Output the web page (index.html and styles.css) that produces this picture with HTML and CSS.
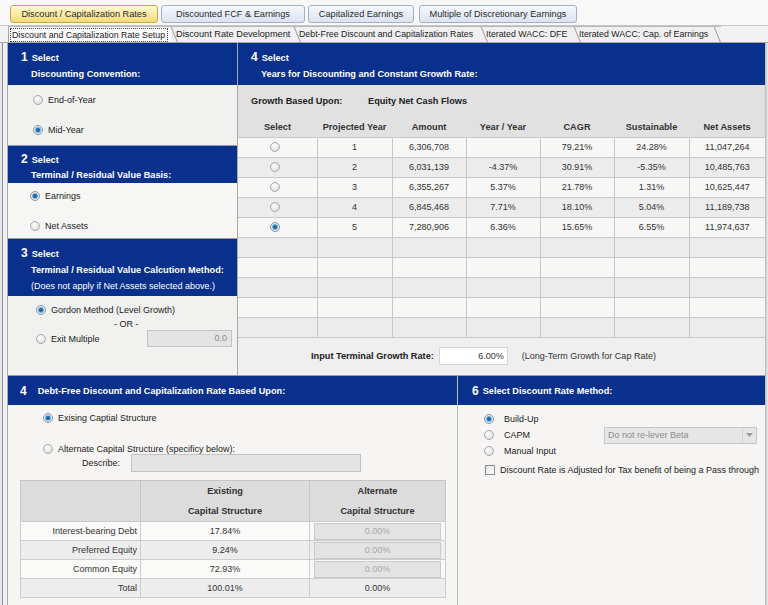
FILE: index.html
```html
<!DOCTYPE html>
<html>
<head>
<meta charset="utf-8">
<link rel="stylesheet" href="styles.css">
</head>
<body>
<div class="topbar">
  <div class="tbtn active w1">Discount / Capitalization Rates</div>
  <div class="tbtn w2">Discounted FCF &amp; Earnings</div>
  <div class="tbtn w3">Capitalized Earnings</div>
  <div class="tbtn w4">Multiple of Discretionary Earnings</div>
</div>
<div class="subtabs">
  <div class="stab t1 active"><span class="focus">Discount and Capitalization Rate Setup</span></div>
  <div class="stab t2">Discount Rate Development</div>
  <div class="stab t3">Debt-Free Discount and Capitalization Rates</div>
  <div class="stab t4">Iterated WACC: DFE</div>
  <div class="stab t5">Iterated WACC: Cap. of Earnings</div>
</div>
<div class="frame">
  <div class="gutter"></div>
  <div class="main">
    <div class="toprow">
      <div class="leftcol">
        <div class="hdr hA">
          <div class="l1"><span class="num">1</span>Select</div>
          <div class="l2">Discounting Convention:</div>
        </div>
        <div class="body b1">
          <div class="opt"><span class="radio"></span>End-of-Year</div>
          <div class="opt"><span class="radio on"></span>Mid-Year</div>
        </div>
        <div class="hdr hB">
          <div class="l1"><span class="num">2</span>Select</div>
          <div class="l2">Terminal / Residual Value Basis:</div>
        </div>
        <div class="body b2">
          <div class="opt"><span class="radio on"></span>Earnings</div>
          <div class="opt"><span class="radio"></span>Net Assets</div>
        </div>
        <div class="hdr hC">
          <div class="l1"><span class="num">3</span>Select</div>
          <div class="l2">Terminal / Residual Value Calcution Method:</div>
          <div class="l2 reg">(Does not apply if Net Assets selected above.)</div>
        </div>
        <div class="body b3">
          <div class="opt"><span class="radio on"></span>Gordon Method (Level Growth)</div>
          <div class="or">- OR -</div>
          <div class="opt exit"><span class="radio"></span><span class="exl">Exit Multiple</span><span class="field num-field">0.0</span></div>
        </div>
      </div>
      <div class="rightcol">
        <div class="hdr hA">
          <div class="l1"><span class="num">4</span>Select</div>
          <div class="l2">Years for Discounting and Constant Growth Rate:</div>
        </div>
        <div class="strip"><span class="gl">Growth Based Upon:</span><span>Equity Net Cash Flows</span></div>
        <table class="proj">
          <colgroup>
            <col class="c1"><col class="c2"><col class="c3"><col class="c3"><col class="c3"><col class="c2"><col class="c4">
          </colgroup>
          <thead>
            <tr><th>Select</th><th>Projected Year</th><th>Amount</th><th>Year / Year</th><th>CAGR</th><th>Sustainable</th><th>Net Assets</th></tr>
          </thead>
          <tbody>
            <tr><td><span class="radio"></span></td><td>1</td><td>6,306,708</td><td></td><td>79.21%</td><td>24.28%</td><td>11,047,264</td></tr>
            <tr><td><span class="radio"></span></td><td>2</td><td>6,031,139</td><td>-4.37%</td><td>30.91%</td><td>-5.35%</td><td>10,485,763</td></tr>
            <tr><td><span class="radio"></span></td><td>3</td><td>6,355,267</td><td>5.37%</td><td>21.78%</td><td>1.31%</td><td>10,625,447</td></tr>
            <tr><td><span class="radio"></span></td><td>4</td><td>6,845,468</td><td>7.71%</td><td>18.10%</td><td>5.04%</td><td>11,189,738</td></tr>
            <tr><td><span class="radio on"></span></td><td>5</td><td>7,280,906</td><td>6.36%</td><td>15.65%</td><td>6.55%</td><td>11,974,637</td></tr>
            <tr><td></td><td></td><td></td><td></td><td></td><td></td><td></td></tr>
            <tr><td></td><td></td><td></td><td></td><td></td><td></td><td></td></tr>
            <tr><td></td><td></td><td></td><td></td><td></td><td></td><td></td></tr>
            <tr><td></td><td></td><td></td><td></td><td></td><td></td><td></td></tr>
            <tr><td></td><td></td><td></td><td></td><td></td><td></td><td></td></tr>
          </tbody>
        </table>
        <div class="term">
          <span class="tl">Input Terminal Growth Rate:</span>
          <span class="tin">6.00%</span>
          <span class="tn">(Long-Term Growth for Cap Rate)</span>
        </div>
      </div>
    </div>
    <div class="bottom">
      <div class="bl">
        <div class="bh"><span class="num">4</span>Debt-Free Discount and Capitalization Rate Based Upon:</div>
        <div class="blbody">
          <div class="opt o1"><span class="radio on"></span>Exising Captial Structure</div>
          <div class="opt o2"><span class="radio"></span>Alternate Capital Structure (specificy below):</div>
          <div class="desc"><span class="dl">Describe:</span><span class="field dfield"></span></div>
          <table class="cap">
            <colgroup><col class="k1"><col class="k2"><col class="k3"></colgroup>
            <thead>
              <tr><th></th><th>Existing<br>Capital Structure</th><th>Alternate<br>Capital Structure</th></tr>
            </thead>
            <tbody>
              <tr><td class="lab">Interest-bearing Debt</td><td>17.84%</td><td><span class="cin">0.00%</span></td></tr>
              <tr><td class="lab">Preferred Equity</td><td>9.24%</td><td><span class="cin">0.00%</span></td></tr>
              <tr><td class="lab">Common Equity</td><td>72.93%</td><td><span class="cin">0.00%</span></td></tr>
              <tr><td class="lab">Total</td><td>100.01%</td><td>0.00%</td></tr>
            </tbody>
          </table>
        </div>
      </div>
      <div class="br">
        <div class="bh"><span class="num">6</span>Select Discount Rate Method:</div>
        <div class="brbody">
          <div class="opt"><span class="radio on"></span>Build-Up</div>
          <div class="opt"><span class="radio"></span>CAPM<span class="dd"><span class="ddt">Do not re-lever Beta</span><span class="dda"><svg width="7" height="4" viewBox="0 0 7 4"><path d="M0 0h7L3.5 4z" fill="#9a9a9a"/></svg></span></span></div>
          <div class="opt"><span class="radio"></span>Manual Input</div>
          <div class="opt chk"><span class="cbox"></span>Discount Rate is Adjusted for Tax benefit of being a Pass through</div>
        </div>
      </div>
    </div>
  </div>
  <div class="shadow"></div>
</div>
</body>
</html>
```
FILE: styles.css
```css
* { box-sizing: border-box; }
html, body { margin: 0; padding: 0; }
body {
  width: 768px;
  height: 605px;
  overflow: hidden;
  background: #f2f2f2;
  font-family: "Liberation Sans", Arial, sans-serif;
  font-size: 9px;
  color: #222;
}

/* top button tabs */
.topbar {
  height: 26px;
  display: flex;
  gap: 3px;
  padding: 5px 0 0 10px;
  background: #f8f8f8;
  border-bottom: 1px solid #c6c6c6;
}
.tbtn {
  height: 18px;
  border: 1px solid #a3b0c6;
  border-radius: 3px;
  background: linear-gradient(#f6f9fd, #dae3f0);
  display: flex;
  align-items: center;
  justify-content: center;
  font-size: 9.2px;
  color: #2a2a2a;
  white-space: nowrap;
}
.tbtn.active {
  border-color: #c9a646;
  background: linear-gradient(#fef9d6, #f6dc76);
}
.w1 { width: 148px; }
.w2 { width: 144px; }
.w3 { width: 106px; }
.w4 { width: 158px; margin-left: 2px; }

/* sub tabs */
.subtabs {
  height: 17px;
  display: flex;
  padding-left: 8px;
  background: #f2f2f2;
  border-bottom: 1px solid #a8a8a8;
}
.stab {
  position: relative;
  height: 16px;
  line-height: 15px;
  font-size: 8.8px;
  color: #222;
  border-top: 1px solid #b8b8b8;
  padding-left: 5px;
  white-space: nowrap;
  background: #f0f0f0;
}
.stab + .stab::before {
  content: "";
  position: absolute;
  left: 3px;
  top: 0;
  width: 1px;
  height: 16px;
  background: #9c9c9c;
  transform: skewX(22deg);
}
.t1 { width: 163px; padding-left: 1px; background: #fbfbfb; border-left: 1px solid #a8a8a8; }
.t2 { width: 123px; font-size: 9.2px; }
.t3 { width: 187px; }
.t4 { width: 93px; }
.t5 { width: 147px; }
.t5::after {
  content: "";
  position: absolute;
  right: 3px;
  top: 0;
  width: 1px;
  height: 16px;
  background: #9c9c9c;
  transform: skewX(22deg);
}
.focus {
  display: inline-block;
  border: 1px dotted #444;
  line-height: 12px;
  padding: 0 2px 0 1px;
  margin-top: 1px;
}

/* frame */
.frame { display: flex; height: 562px; }
.gutter {
  width: 8px;
  background: linear-gradient(to right, #e9e9e9 0 2px, #8d8d8d 2px 3px, #eef2f8 3px 7px, #a9a9a9 7px 8px);
}
.main { width: 757px; display: flex; flex-direction: column; }
.shadow {
  width: 3px;
  background: linear-gradient(to right, #b5b5b5, #d8d8d8 60%, #eeeeee);
}

.toprow { height: 332px; display: flex; }
.leftcol {
  width: 230px;
  border-right: 1px solid #a9a9a9;
  display: flex;
  flex-direction: column;
}
.rightcol {
  width: 527px;
  display: flex;
  flex-direction: column;
  background: #e1e1e1;
}

/* blue headers */
.hdr {
  background: #0a308e;
  color: #fff;
  font-weight: bold;
  font-size: 9.2px;
  padding-left: 13px;
}
.hdr .l1 { display: flex; align-items: baseline; }
.num { font-size: 12px; font-weight: bold; margin-right: 4px; }
.hdr .l2 { padding-left: 10px; }
.hdr .reg { font-weight: normal; font-size: 9px; }
.hA { height: 42px; padding-top: 6px; line-height: 16px; }
.hB { height: 38px; padding-top: 6px; line-height: 15px; border-top: 1px solid #8c9cc7; }
.hC { height: 58px; padding-top: 6px; line-height: 16px; border-top: 1px solid #9a9a9a; }

/* bodies */
.body { background: #f1f1f0; display: flex; flex-direction: column; }
.opt { display: flex; align-items: center; gap: 5px; height: 16px; white-space: nowrap; }
.b1 { height: 60px; padding: 7px 0 0 25px; gap: 14px; }
.b2 { height: 55px; padding: 5px 0 0 22px; gap: 14px; background: #f6f6f5; }
.b3 { height: 79px; padding: 6px 0 0 28px; }
.or { height: 12px; line-height: 12px; padding-left: 78px; }
.exit { height: 17px; }
.exl { width: 91px; }
.field {
  display: inline-block;
  background: #e4e4e4;
  border: 1px solid #c3c3c3;
  color: #8a8a8a;
}
.num-field { width: 85px; height: 17px; line-height: 15px; text-align: right; padding-right: 4px; }

/* radio */
.radio {
  flex: none;
  display: inline-block;
  width: 10px;
  height: 10px;
  border-radius: 50%;
  border: 1px solid #ababab;
  background: radial-gradient(circle at 40% 35%, #ffffff, #d4d4d4);
}
.radio.on {
  border-color: #8796a8;
  background: radial-gradient(circle, #0f5598 0, #2a7bc0 1.8px, #9bc0e0 2.8px, #e8e8e8 3.5px);
}
.cbox {
  flex: none;
  width: 10px;
  height: 10px;
  border: 1px solid #8e8e8e;
  background: linear-gradient(135deg, #e2e2e2, #ffffff);
}

/* right column */
.strip { height: 32px; padding: 8px 0 0 13px; line-height: 16px; font-weight: bold; font-size: 9.2px; color: #222; display: flex; }
.gl { width: 117px; }

.proj {
  border-collapse: collapse;
  table-layout: fixed;
  width: 527px;
}
.c1 { width: 79px; }
.c2 { width: 75px; }
.c3 { width: 74px; }
.c4 { width: 76px; }
.proj th {
  height: 20px;
  font-weight: bold;
  font-size: 9.2px;
  color: #333;
  text-align: center;
  padding: 0;
  background: #e1e1e1;
}
.proj td {
  height: 20px;
  padding: 0;
  text-align: center;
  border: 1px solid #c8c8c8;
  color: #333;
}
.proj td:first-child { border-left: none; }
.proj td:last-child { border-right: none; }
.proj tbody tr:nth-child(odd) td { background: #f7f7f5; }
.proj tbody tr:nth-child(even) td { background: #ececec; }
.proj .radio { vertical-align: middle; margin-left: -5px; margin-top: -2px; }

.term {
  flex: 1;
  display: flex;
  align-items: center;
  padding-left: 73px;
  background: #efefef;
}
.tl { font-weight: bold; font-size: 9.2px; margin-right: 5px; }
.tin {
  width: 69px;
  height: 18px;
  line-height: 16px;
  background: #fff;
  border: 1px solid #d6d6d6;
  text-align: right;
  padding-right: 3px;
  color: #333;
}
.tn { margin-left: 14px; color: #333; }

/* bottom */
.bottom { height: 230px; display: flex; border-top: 1px solid #9c9c9c; }
.bl { width: 450px; border-right: 1px solid #bdbdbd; display: flex; flex-direction: column; }
.br { width: 307px; display: flex; flex-direction: column; }
.bh {
  height: 29px;
  background: #0a308e;
  color: #fff;
  font-weight: bold;
  font-size: 9.2px;
  display: flex;
  align-items: center;
  padding-left: 12px;
}
.bl .bh .num { margin-right: 11px; }
.br .bh { padding-left: 14px; }
.br .bh .num { margin-right: 4px; }

.blbody { flex: 1; background: #f6f5f3; padding: 6px 0 0 35px; display: flex; flex-direction: column; }
.blbody .opt { height: 14px; }
.o2 { margin-top: 17px; }
.desc { display: flex; align-items: center; margin: -2px 0 0 39px; height: 18px; }
.dl { width: 49px; }
.dfield { width: 230px; height: 18px; }

.cap {
  margin: 8px 0 0 -23px;
  border-collapse: collapse;
  table-layout: fixed;
  width: 425px;
  border: 1px solid #c5c5c5;
}
.k1 { width: 120px; }
.k2 { width: 169px; }
.k3 { width: 136px; }
.cap th {
  height: 39px;
  background: #dcdcdc;
  font-weight: bold;
  font-size: 9.2px;
  line-height: 20px;
  color: #333;
  padding: 0;
  border-left: 1px solid #c5c5c5;
}
.cap th:first-child { border-left: none; }
.cap td {
  height: 19px;
  padding: 0;
  text-align: center;
  border: 1px solid #cdcdcd;
  color: #333;
}
.cap td.lab { text-align: right; padding-right: 3px; }
.cap tbody tr:nth-child(odd) td { background: #fafaf8; }
.cap tbody tr:nth-child(even) td { background: #ededed; }
.cin {
  display: block;
  margin: 0 4px 0 4px;
  height: 17px;
  line-height: 15px;
  background: #e3e3e3;
  border: 1px solid #c9c9c9;
  color: #a8a8a8;
}

.brbody { flex: 1; background: #f6f5f3; padding: 6px 8px 0 26px; display: flex; flex-direction: column; }
.brbody .opt { gap: 10px; }
.dd {
  margin-left: auto;
  width: 153px;
  height: 17px;
  display: flex;
  align-items: center;
  background: #e6e6e6;
  border: 1px solid #c6c6c6;
  color: #8c8c8c;
}
.ddt { flex: 1; padding-left: 3px; }
.dda { width: 14px; height: 100%; border-left: 1px solid #d2d2d2; display: flex; align-items: center; justify-content: center; }
.brbody .chk { margin-top: 3px; gap: 5px; padding-left: 1px; }
```
